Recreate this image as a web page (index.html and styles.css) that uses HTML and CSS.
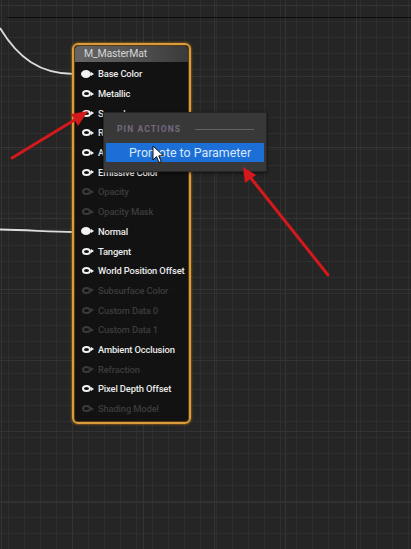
FILE: index.html
```html
<!DOCTYPE html>
<html lang="en">
<head>
<meta charset="utf-8">
<title>Material Graph</title>
<link rel="stylesheet" href="styles.css">
</head>
<body>
<div class="graph">
  <div class="rule"></div>

  <svg class="wires" width="411" height="549" viewBox="0 0 411 549">
    <path d="M0 28 C 18 58, 40 74, 74 74" />
    <path d="M0 229.5 C 30 230, 50 232, 74 232" />
  </svg>

  <div class="node">
    <div class="node-title">M_MasterMat</div>
    <ul class="pins">
      <li class="pin linked"><span class="pin-icon"></span>Base Color</li>
      <li class="pin"><span class="pin-icon"></span>Metallic</li>
      <li class="pin"><span class="pin-icon"></span>Specular</li>
      <li class="pin"><span class="pin-icon"></span>Roughness</li>
      <li class="pin"><span class="pin-icon"></span>Anisotropy</li>
      <li class="pin"><span class="pin-icon"></span>Emissive Color</li>
      <li class="pin off"><span class="pin-icon"></span>Opacity</li>
      <li class="pin off"><span class="pin-icon"></span>Opacity Mask</li>
      <li class="pin linked"><span class="pin-icon"></span>Normal</li>
      <li class="pin"><span class="pin-icon"></span>Tangent</li>
      <li class="pin"><span class="pin-icon"></span>World Position Offset</li>
      <li class="pin off"><span class="pin-icon"></span>Subsurface Color</li>
      <li class="pin off"><span class="pin-icon"></span>Custom Data 0</li>
      <li class="pin off"><span class="pin-icon"></span>Custom Data 1</li>
      <li class="pin"><span class="pin-icon"></span>Ambient Occlusion</li>
      <li class="pin off"><span class="pin-icon"></span>Refraction</li>
      <li class="pin"><span class="pin-icon"></span>Pixel Depth Offset</li>
      <li class="pin off"><span class="pin-icon"></span>Shading Model</li>
    </ul>
  </div>

  <div class="menu">
    <div class="menu-heading"><span>PIN ACTIONS</span><i></i></div>
    <div class="menu-item active">Promote to Parameter</div>
  </div>

  <svg class="cursor" width="14" height="20" viewBox="0 0 14 20">
    <path d="M1 1 L1 15 L4.5 11.5 L7 17.5 L9.2 16.5 L6.8 10.8 L11.5 10.8 Z" />
  </svg>

  <svg class="arrows" width="411" height="549" viewBox="0 0 411 549">
    <line x1="12" y1="158" x2="76" y2="119" />
    <polygon points="88,111 71,114 78,126" />
    <line x1="328" y1="275" x2="250" y2="177" />
    <polygon points="243,167 245,183 256,175" />
  </svg>
</div>
</body>
</html>
```

FILE: styles.css
```css
html, body {
  margin: 0;
  padding: 0;
  background: #262626;
}

.graph {
  position: relative;
  width: 411px;
  height: 549px;
  overflow: hidden;
  font-family: Roboto, "Liberation Sans", sans-serif;
  background-color: #252525;
  background-image:
    linear-gradient(to right, #343434 1px, transparent 1px),
    linear-gradient(to bottom, #343434 1px, transparent 1px),
    linear-gradient(to right, #2e2e2e 1px, transparent 1px),
    linear-gradient(to bottom, #2e2e2e 1px, transparent 1px);
  background-size: 71px 71px, 71px 71px, 16px 16px, 16px 16px;
  background-position: 1px 0, 0 5px, 8px 0, 0 5px;
}

/* horizontal divider near the top of the canvas */
.rule {
  position: absolute;
  left: 7px;
  right: 0;
  top: 17px;
  height: 1px;
  background: #0b0b0b;
}

.wires,
.arrows {
  position: absolute;
  left: 0;
  top: 0;
}

.wires path {
  fill: none;
  stroke: #dcdcdc;
  stroke-width: 1.8;
}

.arrows line {
  stroke: #d3191b;
  stroke-width: 3;
  stroke-linecap: round;
}

.arrows polygon {
  fill: #d3191b;
}

/* material result node */
.node {
  position: absolute;
  left: 72px;
  top: 43px;
  width: 115px;
  height: 377px;
  border: 2px solid #d89c3a;
  border-radius: 6px;
  background: rgba(18, 18, 18, 0.96);
  box-shadow: 0 0 2px 1px rgba(170, 110, 30, 0.55), inset 0 0 0 1px #5a3a14;
  overflow: hidden;
}

.node-title {
  height: 16px;
  line-height: 16px;
  margin: 1px 1px 0;
  padding-left: 9px;
  border-radius: 4px 4px 0 0;
  font-size: 10.5px;
  color: #d4d4d4;
  background: linear-gradient(to right, #666 0%, #555 45%, #3a3a3a 100%);
  letter-spacing: -0.2px;
}

.pins {
  list-style: none;
  margin: 0;
  padding: 2px 0 0 0;
}

.pin {
  display: flex;
  align-items: center;
  height: 19.7px;
  padding-left: 8px;
  font-size: 9.4px;
  font-weight: 500;
  color: #ececec;
  white-space: nowrap;
  letter-spacing: -0.15px;
}

.pin-icon {
  position: relative;
  width: 9px;
  height: 7px;
  margin-right: 7px;
  border: 2px solid #f2f2f2;
  border-radius: 50%;
  box-sizing: border-box;
}

.pin-icon::after {
  content: "";
  position: absolute;
  right: -5px;
  top: 50%;
  margin-top: -2px;
  border-left: 3px solid #f2f2f2;
  border-top: 2px solid transparent;
  border-bottom: 2px solid transparent;
}

.pin.linked .pin-icon {
  background: #f4f4f4;
  width: 10px;
  height: 8px;
  margin-left: -1px;
}

.pin.off {
  color: #3c3c3c;
}

.pin.off .pin-icon {
  border-color: #3a3a3a;
}

.pin.off .pin-icon::after {
  border-left-color: #3a3a3a;
}

/* pin context menu */
.menu {
  position: absolute;
  left: 103px;
  top: 112px;
  width: 158px;
  height: 54px;
  padding: 2px;
  background: #383838;
  border: 1px solid #262626;
  box-shadow: 0 1px 3px rgba(0, 0, 0, 0.6);
}

.menu-heading {
  display: flex;
  align-items: center;
  gap: 14px;
  height: 28px;
  padding: 0 10px 0 11px;
  font-size: 8.5px;
  font-weight: 700;
  letter-spacing: 1.1px;
  color: #75697f;
}

.menu-heading i {
  flex: 1;
  height: 1px;
  background: #636363;
}

.menu-item {
  height: 19px;
  line-height: 19px;
  padding-left: 23px;
  font-size: 12.4px;
  color: #d9e8ff;
}

.menu-item.active {
  background: #1b6fd6;
}

.cursor {
  position: absolute;
  left: 152px;
  top: 145px;
}

.cursor path {
  fill: #ffffff;
  stroke: #111;
  stroke-width: 1;
}
```
